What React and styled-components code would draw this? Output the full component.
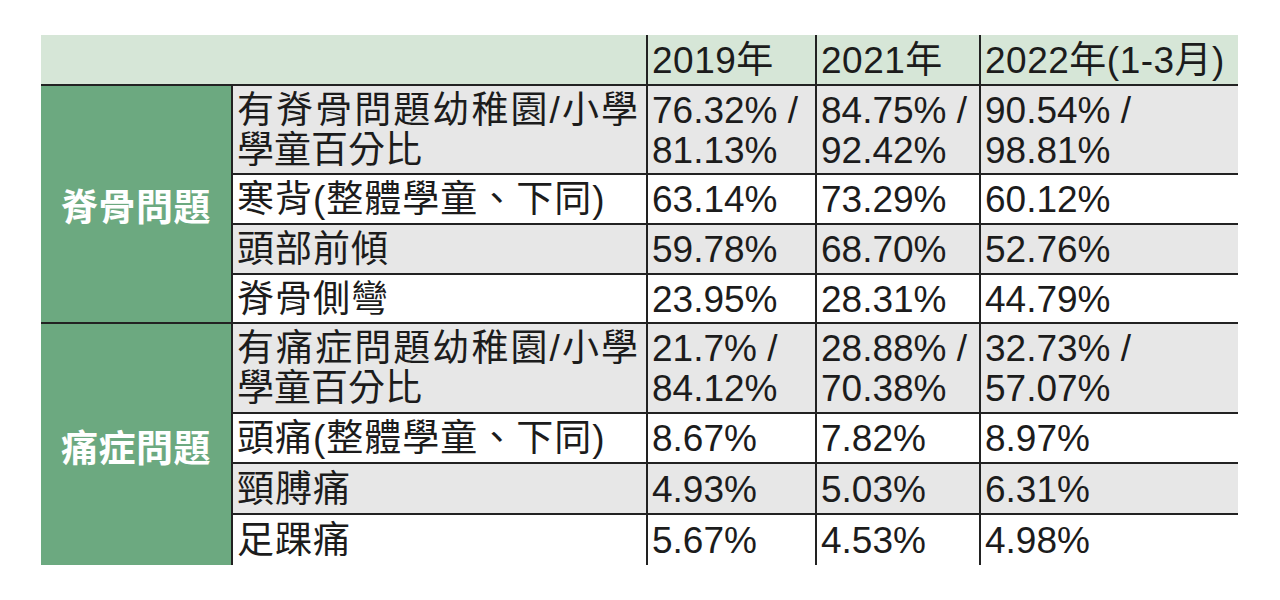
import styled, { createGlobalStyle } from "styled-components";

const GlobalStyle = createGlobalStyle`
  html, body {
    margin: 0;
    padding: 0;
    background: #ffffff;
  }
`;

const Page = styled.div`
  padding: 35px 0 0 41px;
  font-family: "Liberation Sans", "Noto Sans CJK TC", sans-serif;
  color: #1c1c1c;
`;

const Table = styled.div`
  display: grid;
  width: 1197px;
  grid-template-columns: 190px 415px 169px 164px 259px;
  grid-template-rows: 49px 89px 50px 50px 49px 90px 50px 51px 52px;
`;

const HeadBlank = styled.div`
  grid-column: 1 / 3;
  background: #d6e6d7;
`;

const HeadCell = styled.div`
  display: flex;
  align-items: center;
  padding: 2px 0 0 4px;
  background: #d6e6d7;
  border-left: 2px solid #222;
  font-size: 37px;
  line-height: 40px;
  letter-spacing: 0.5px;
  white-space: nowrap;
`;

const GroupLabel = styled.div`
  grid-row: span ${(p) => p.$span};
  display: flex;
  align-items: center;
  justify-content: center;
  background: #6ca980;
  border-top: 2px solid #222;
  color: #ffffff;
  font-size: 37px;
  font-weight: 700;
  letter-spacing: 0.5px;
  padding-top: 2px;
`;

const Cell = styled.div`
  display: flex;
  flex-direction: column;
  justify-content: center;
  padding: 2px 0 0 4px;
  background: ${(p) => (p.$shade ? "#e7e7e7" : "#ffffff")};
  border-top: 2px solid #222;
  border-left: 2px solid #222;
  font-size: 37px;
  line-height: 40px;
  white-space: nowrap;
`;

const ItemCell = styled(Cell)`
  letter-spacing: 1px;
`;

// first line of a two-line label is spread to the cell width, like the print layout
const Line = styled.span`
  display: block;
  ${(p) =>
    p.$spread &&
    `
    width: 402px;
    text-align: justify;
    text-align-last: justify;
  `}
  ${(p) => p.$tight && `letter-spacing: 0;`}
`;

const groups = [
  {
    label: "脊骨問題",
    rows: [
      ["有脊骨問題幼稚園/小學\n學童百分比", "76.32% /\n81.13%", "84.75% /\n92.42%", "90.54% /\n98.81%"],
      ["寒背(整體學童、下同)", "63.14%", "73.29%", "60.12%"],
      ["頭部前傾", "59.78%", "68.70%", "52.76%"],
      ["脊骨側彎", "23.95%", "28.31%", "44.79%"],
    ],
  },
  {
    label: "痛症問題",
    rows: [
      ["有痛症問題幼稚園/小學\n學童百分比", "21.7% /\n84.12%", "28.88% /\n70.38%", "32.73% /\n57.07%"],
      ["頭痛(整體學童、下同)", "8.67%", "7.82%", "8.97%"],
      ["頸膊痛", "4.93%", "5.03%", "6.31%"],
      ["足踝痛", "5.67%", "4.53%", "4.98%"],
    ],
  },
];

const Lines = ({ text, item }) => {
  const parts = text.split("\n");
  const multi = parts.length > 1;
  return parts.map((line, i) => (
    <Line key={i} $spread={item && multi && i === 0} $tight={item && multi && i > 0}>
      {line}
    </Line>
  ));
};

export default function App() {
  return (
    <>
      <GlobalStyle />
      <Page>
        <Table>
          <HeadBlank />
          <HeadCell>2019年</HeadCell>
          <HeadCell>2021年</HeadCell>
          <HeadCell>2022年(1-3月)</HeadCell>
          {groups.map((g) => [
            <GroupLabel key={g.label} $span={g.rows.length}>
              {g.label}
            </GroupLabel>,
            ...g.rows.map((row, ri) => {
              const shade = ri % 2 === 0;
              return [
                <ItemCell key={`${g.label}-${ri}-i`} $shade={shade}>
                  <Lines text={row[0]} item />
                </ItemCell>,
                ...row.slice(1).map((v, vi) => (
                  <Cell key={`${g.label}-${ri}-${vi}`} $shade={shade}>
                    <Lines text={v} />
                  </Cell>
                )),
              ];
            }),
          ])}
        </Table>
      </Page>
    </>
  );
}
